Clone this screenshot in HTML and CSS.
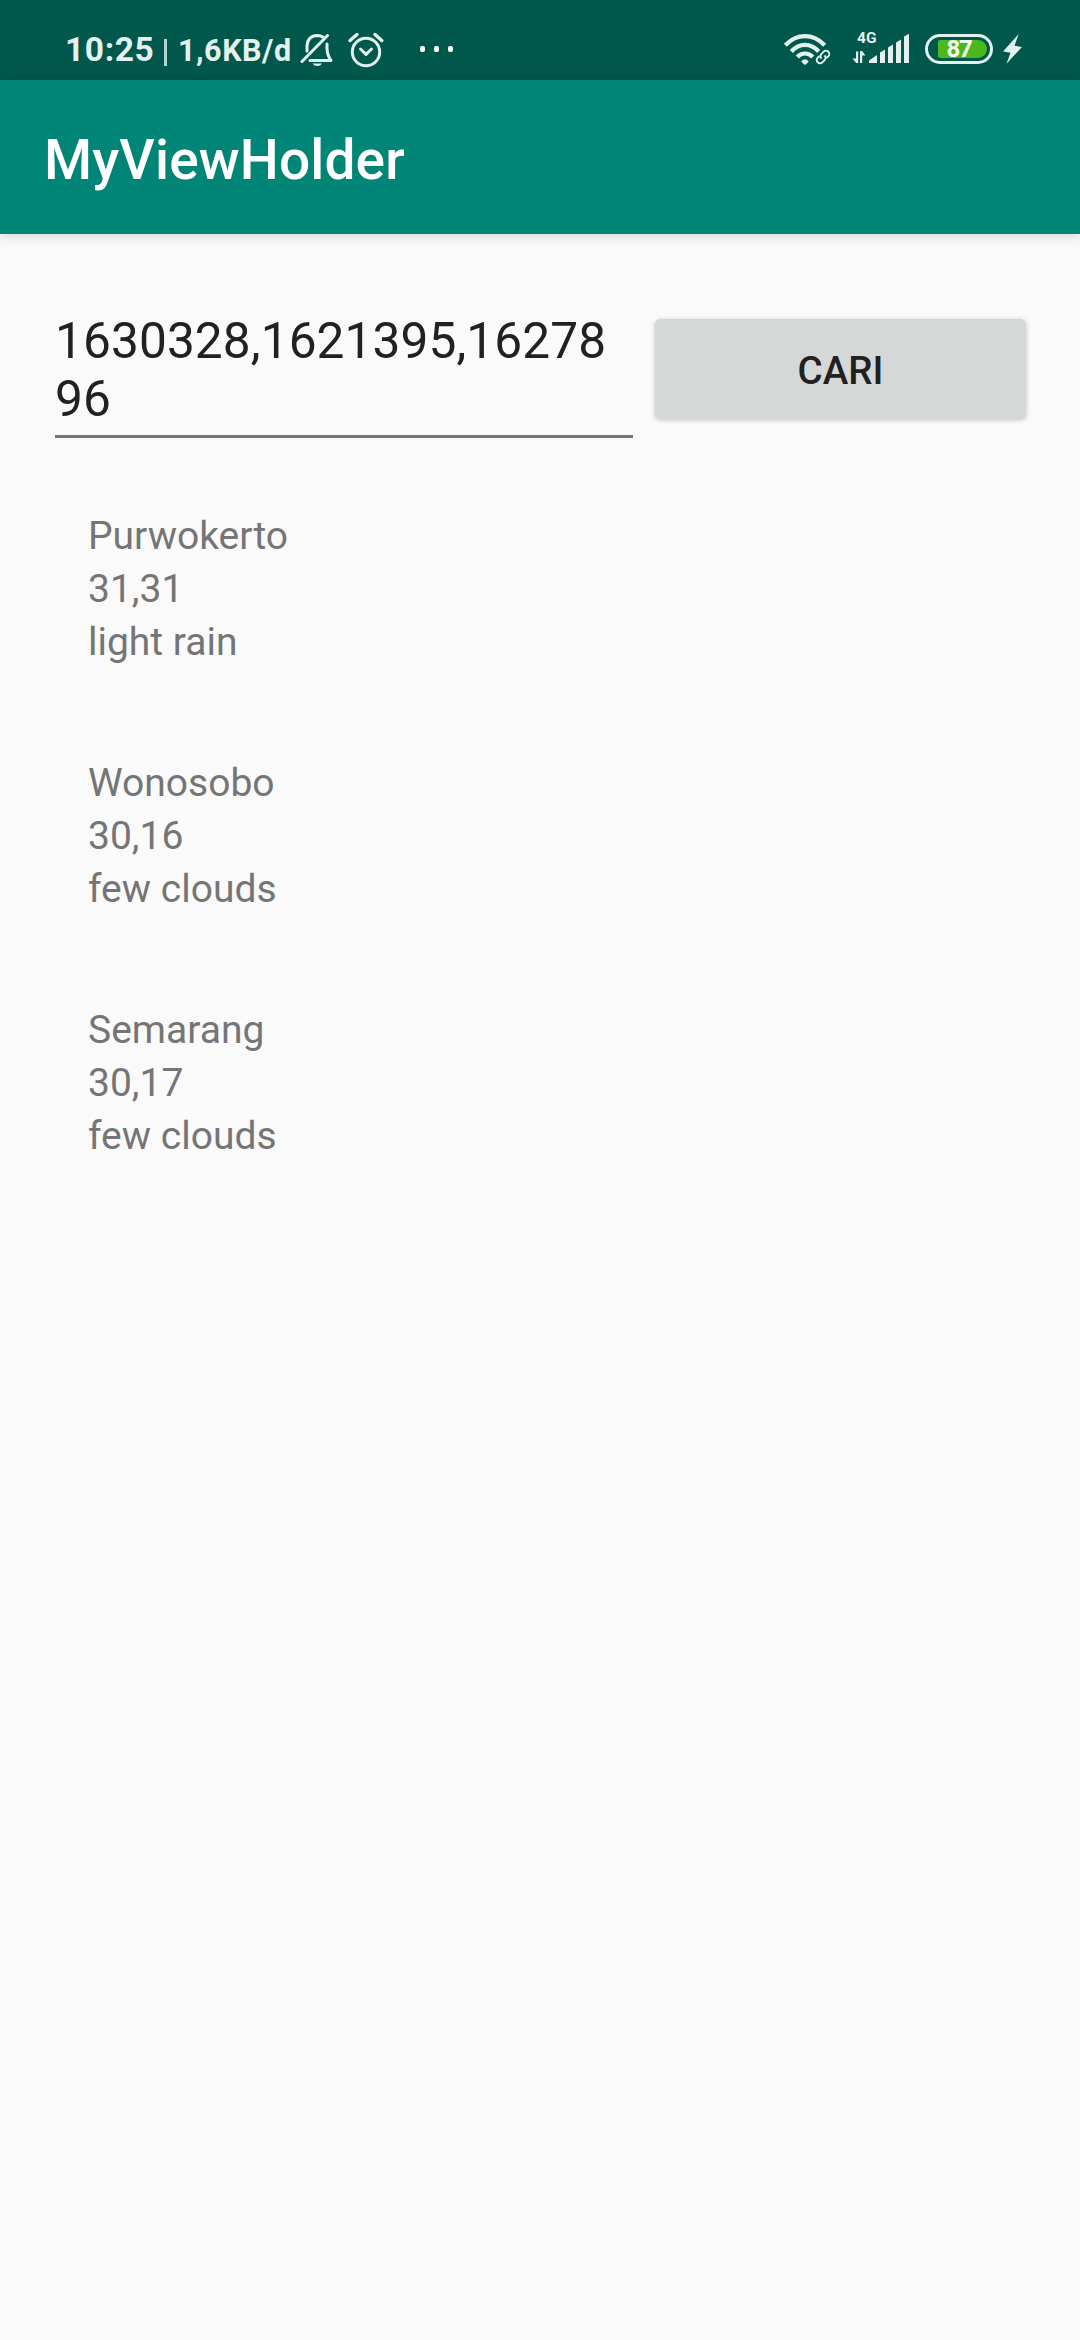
FILE: index.html
```html
<!DOCTYPE html>
<html lang="id">
<head>
<meta charset="utf-8">
<title>MyViewHolder</title>
<link rel="stylesheet" href="styles.css">
</head>
<body>
<div class="status-bar">
  <div class="status-left">
    <span class="clock">10:25</span>
    <span class="divider"></span>
    <span class="speed">1,6KB/d</span>
    <svg class="icon bell" width="34" height="36" viewBox="300 32 34 36" fill="none" stroke="#e3f1ef" stroke-width="3" stroke-linecap="round" stroke-linejoin="round">
      <path d="M302 61.500 327.500 35.500M307 51V46Q307.500 36 317 35.500Q321.500 35.500 324 38M327 44V48Q327 55 331 60.500H310"/>
      <path d="M312.500 63.500h9.500q-1.500 2.500-4.700 2.500t-4.800-2.500z" fill="#e3f1ef" stroke="none"/>
    </svg>
    <svg class="icon alarm" width="38" height="38" viewBox="347 31 38 38" fill="none" stroke="#e3f1ef" stroke-width="3" stroke-linecap="round" stroke-linejoin="round">
      <circle cx="366" cy="52" r="13.700"/>
      <path d="M360.500 49 366 54.300 371.500 49"/>
      <path d="M350 40.500 357 34.500M375 34.500 381.800 40.500" stroke-width="3.500"/>
    </svg>
    <svg class="icon dots" width="36" height="8" viewBox="419 45 36 8" fill="#fff">
      <rect x="420" y="46" width="5" height="6" rx="2"/><rect x="434" y="46" width="5" height="6" rx="2"/><rect x="448" y="46" width="5" height="6" rx="2"/>
    </svg>
  </div>
  <div class="status-right">
    <svg class="icon wifi" width="50" height="34" viewBox="783 32 50 34" fill="none" stroke="#e3f1ef">
      <path d="M785.300 45.300Q794 36.200 805 36.200T824.700 45.300M791.300 51.500Q797.500 44.900 805 44.900T818.700 51.500M797.300 57Q800.500 53.500 805 53.500T812.700 57" stroke-width="4.200"/>
      <path d="M801.300 61.200Q805 57.500 808.700 61.200 808.200 63 805 65 801.800 63 801.300 61.200z" fill="#e3f1ef" stroke="none"/>
      <g transform="rotate(-45 823 57)" stroke-width="1.900">
        <path d="M821 53.700h-2.200a3.300 3.300 0 0 0 0 6.600h3.400a3.300 3.300 0 0 0 3-3.300M825 60.300h2.200a3.300 3.300 0 0 0 0-6.600h-3.400a3.300 3.300 0 0 0-3 3.300"/>
      </g>
    </svg>
    <div class="cell">
      <span class="network">4G</span>
      <svg class="icon signal" width="58" height="32" viewBox="852 33 58 32" fill="#e3f1ef">
        <path d="M856 51.500h2.200V63h-2.100L852.500 58.500h3.500zM860 51h2.200l3.300 4.500h-3.300V63H860z"/>
        <path d="M869 63v-2.500l8-5.500v8zM880 63V52.500l5-3V63zM888 63V47.500l5-3V63zM896 63V42.500l5-3V63zM904 63V36.500l5-2.800V63z"/>
      </svg>
    </div>
    <div class="battery"><div class="charge">87</div></div>
    <svg class="icon bolt" width="20" height="30" viewBox="1003 34 20 30" fill="#e3f1ef">
      <path d="M1018.700 34 1003 51.500 1010.500 52.700 1006.500 63.700 1022 47 1014.500 45.800z"/>
    </svg>
  </div>
</div>
<header class="app-bar"><h1 class="app-title">MyViewHolder</h1></header>
<main class="content">
  <div class="search-row">
    <div class="city-input">1630328,1621395,1627896</div>
    <button class="search-button" type="button">CARI</button>
  </div>
  <div class="city-list">
    <div class="city"><div>Purwokerto</div><div>31,31</div><div>light rain</div></div>
    <div class="city"><div>Wonosobo</div><div>30,16</div><div>few clouds</div></div>
    <div class="city"><div>Semarang</div><div>30,17</div><div>few clouds</div></div>
  </div>
</main>
</body>
</html>
```
FILE: styles.css
```css
* { box-sizing: border-box; }
body {
  margin: 0;
  min-height: 2340px;
  background: #fafafa;
  font-family: Roboto, sans-serif;
}
.icon { display: block; flex: none; }
.status-bar {
  display: flex;
  justify-content: space-between;
  height: 80px;
  padding: 0 57px 0 65px;
  background: #00574b;
  color: #e3f1ef;
}
.status-left, .status-right { display: flex; align-items: flex-start; }
.clock {
  width: 99px;
  margin-top: 30px;
  font-size: 33.5px;
  line-height: 40px;
  font-weight: 700;
  letter-spacing: 0.6px;
}
.divider { width: 3px; height: 27px; margin-top: 39px; background: #b4d2ce; }
.speed {
  width: 133px;
  padding-left: 11px;
  margin-top: 31px;
  font-size: 30.5px;
  line-height: 40px;
  font-weight: 700;
  letter-spacing: 0.55px;
  white-space: nowrap;
}
.bell { margin-top: 32px; }
.alarm { margin: 31px 34px 0 13px; }
.dots { margin-top: 45px; }
.wifi { margin-top: 32px; }
.cell { display: grid; margin: 30px 15px 0 19px; }
.cell > * { grid-area: 1 / 1; }
.network { margin-left: 5px; font-size: 15.5px; line-height: 17px; font-weight: 700; }
.signal { margin-top: 3px; }
.battery {
  width: 68px;
  height: 30px;
  margin: 34px 10px 0 0;
  padding: 3px 3px 3px 10px;
  border: 3px solid #e3f1ef;
  border-radius: 15px;
}
.charge {
  width: 49px;
  height: 18px;
  padding-right: 7px;
  border-radius: 2px 9px 9px 2px;
  background: #4cb81e;
  color: #f4fbef;
  font-size: 24px;
  line-height: 18.5px;
  font-weight: 700;
  letter-spacing: -1.3px;
  text-align: center;
}
.bolt { margin-top: 34px; }
.app-bar {
  height: 154px;
  padding: 48px 44px 0;
  background: #008577;
  box-shadow: 0 2px 12px rgba(0, 0, 0, 0.15);
}
.app-title {
  margin: 0;
  color: #fff;
  font-size: 55px;
  line-height: 64px;
  font-weight: 500;
  letter-spacing: 0.15px;
}
.content { padding: 78px 54px 0 55px; }
.search-row { display: flex; align-items: flex-start; gap: 22px; }
.city-input {
  width: 578px;
  height: 126px;
  padding-right: 11px;
  border-bottom: 3px solid #757575;
  color: #212121;
  font-size: 49.6px;
  line-height: 58px;
  letter-spacing: 0.1px;
  word-break: break-all;
}
.search-button {
  flex: 1;
  height: 100px;
  margin-top: 7px;
  padding: 3px 0 0;
  border: 0;
  border-radius: 5.5px;
  background: #d6d8d7;
  box-shadow: 0 1px 5px rgba(0, 0, 0, 0.22);
  color: #212121;
  font-family: inherit;
  font-size: 38.5px;
  font-weight: 500;
}
.city-list {
  display: grid;
  gap: 88px;
  padding: 72px 33px 0;
  color: #757575;
  font-size: 39px;
  line-height: 53px;
}
```
